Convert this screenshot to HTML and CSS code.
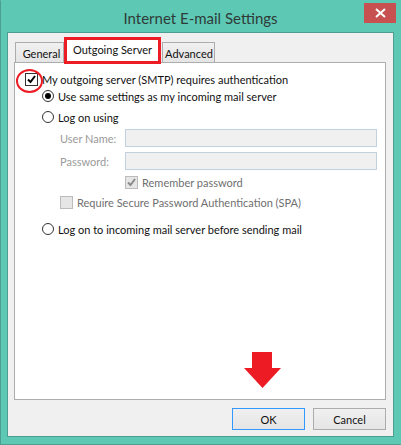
FILE: index.html
```html
<!DOCTYPE html>
<html lang="en">
<head>
  <meta charset="UTF-8" />
  <title>Internet E-mail Settings</title>
  <link rel="stylesheet" href="styles.css">
</head>
<body>

  <div class="window">
    <div class="titlebar">
      <div class="title">Internet E-mail Settings</div>
      <div class="close">
        <svg width="11" height="10" viewBox="0 0 11 10"><path d="M1 1 L10 9 M10 1 L1 9" stroke="#fff" stroke-width="2"/></svg>
      </div>
    </div>

    <div class="client">
      <div class="tabs">
        <div class="tab">General</div>
        <div class="tab active">Outgoing Server</div>
        <div class="tab">Advanced</div>
      </div>

      <div class="panel">
        <div class="row auth">
          <span class="check"><svg width="11" height="11" viewBox="0 0 11 11"><path d="M2 5.5 L4.5 8 L9 2" fill="none" stroke="#000" stroke-width="2"/></svg></span>
          <span>My outgoing server (SMTP) requires authentication</span>
        </div>
        <span class="ring"></span>

        <div class="row opt same"><span class="radio on"></span>Use same settings as my incoming mail server</div>
        <div class="row opt logon"><span class="radio"></span>Log on using</div>

        <div class="field user"><span class="label">User Name:</span><span class="input"></span></div>
        <div class="field pass"><span class="label">Password:</span><span class="input"></span></div>

        <div class="row dim remember">
          <span class="check off"><svg width="11" height="11" viewBox="0 0 11 11"><path d="M2 5.5 L4.5 8 L9 2" fill="none" stroke="#8a8a8a" stroke-width="2"/></svg></span>
          Remember password
        </div>
        <div class="row dim spa"><span class="check off"></span>Require Secure Password Authentication (SPA)</div>

        <div class="row opt before"><span class="radio"></span>Log on to incoming mail server before sending mail</div>

        <svg class="arrow" width="37" height="36" viewBox="0 0 37 36"><polygon points="8,0 28,0 28,16 37,16 18.5,36 0,16 8,16" fill="#ed1c24"/></svg>
      </div>

      <div class="buttons">
        <button class="btn default">OK</button>
        <button class="btn">Cancel</button>
      </div>
    </div>
  </div>

</body>
</html>
```

FILE: styles.css
```css
* { margin: 0; padding: 0; box-sizing: border-box; }

body {
  font-family: Lato, 'Liberation Sans', sans-serif;
  font-size: 11px;
  color: #111;
  background: #5dc9b5;
}

.window {
  width: 401px;
  height: 445px;
  display: flex;
  flex-direction: column;
  background: #5dc9b5;
  border: 1px solid #4b9e91;
  border-right-color: #5dc9b5;
  border-top-color: #5dc9b5;
  padding: 0 6px 7px 6px;
}

.titlebar {
  position: relative;
  height: 31px;
  display: flex;
  align-items: center;
  justify-content: center;
}

.title {
  font-size: 15px;
  color: #2f3b38;
  padding-top: 2px;
}

.close {
  position: absolute;
  top: 2px;
  right: -2px;
  width: 32px;
  height: 20px;
  background: #c75050;
  display: flex;
  align-items: center;
  justify-content: center;
}

.close svg { display: block; }

.client {
  flex: 1;
  background: #f0f0f0;
  border: 1px solid #4b9e91;
  display: flex;
  flex-direction: column;
  padding: 4px 7px 0 6px;
}

/* tabs */
.tabs {
  display: flex;
  align-items: flex-end;
  height: 25px;
  padding-left: 1px;
  position: relative;
  z-index: 1;
}

.tab {
  height: 20px;
  border: 1px solid #acacac;
  border-bottom: none;
  background: linear-gradient(#f0f0f0, #e5e5e5);
  display: flex;
  align-items: center;
  justify-content: center;
  padding-top: 1px;
}

.tab:first-child { width: 49px; padding-left: 4px; }

.tab.active {
  height: 27px;
  margin-bottom: -2px;
  width: 97px;
  background: #fff;
  border: 3px solid #ed1c24;
  padding: 0 0 3px 0;
}

.tab:last-child { width: 53px; margin-left: 1px; padding-left: 1px; }

/* panel */
.panel {
  position: relative;
  height: 338px;
  background: #fff;
  border: 1px solid #adadad;
  padding: 9px 0 0 0;
}

.row {
  display: flex;
  align-items: center;
  height: 14px;
  white-space: nowrap;
}

.auth { padding-left: 10px; gap: 4px; }

.opt { padding-left: 27px; gap: 4px; }
.same { margin-top: 3px; }
.logon { margin-top: 7px; }
.before { margin-top: 13px; }

.check {
  width: 13px;
  height: 13px;
  border: 1px solid #333;
  background: #fff;
  display: flex;
  align-items: center;
  justify-content: center;
}

.check svg { display: block; }

.check.off {
  border-color: #bcbcbc;
  background: #e6e6e6;
}

.radio {
  width: 12px;
  height: 12px;
  border: 1px solid #333;
  border-radius: 50%;
  background: #fff;
  position: relative;
}

.radio.on::after {
  content: "";
  position: absolute;
  left: 2px;
  top: 2px;
  width: 6px;
  height: 6px;
  border-radius: 50%;
  background: #000;
}

.ring {
  position: absolute;
  left: 1px;
  top: 6px;
  width: 27px;
  height: 24px;
  border: 2.5px solid #ed1c24;
  border-radius: 50%;
}

.field {
  display: flex;
  align-items: center;
  padding-left: 45px;
  height: 18px;
}

.user { margin-top: 5px; }
.pass { margin-top: 5px; }

.label {
  width: 65px;
  color: #9a9a9a;
}

.input {
  width: 252px;
  height: 18px;
  border: 1px solid #c3d0dd;
  background: #f0f0f0;
}

.dim { color: #6f6f6f; gap: 4px; }
.remember { margin-top: 5px; padding-left: 110px; }
.spa { margin-top: 6px; padding-left: 45px; }

.arrow {
  position: absolute;
  left: 229px;
  top: 289px;
}

/* buttons */
.buttons {
  display: flex;
  justify-content: flex-end;
  gap: 8px;
  margin-top: 8px;
}

.btn {
  width: 73px;
  height: 22px;
  font-family: inherit;
  font-size: 11px;
  color: #111;
  border: 1px solid #acacac;
  background: linear-gradient(#f0f0f0, #e5e5e5);
}

.btn.default { border-color: #3399ff; }
```
